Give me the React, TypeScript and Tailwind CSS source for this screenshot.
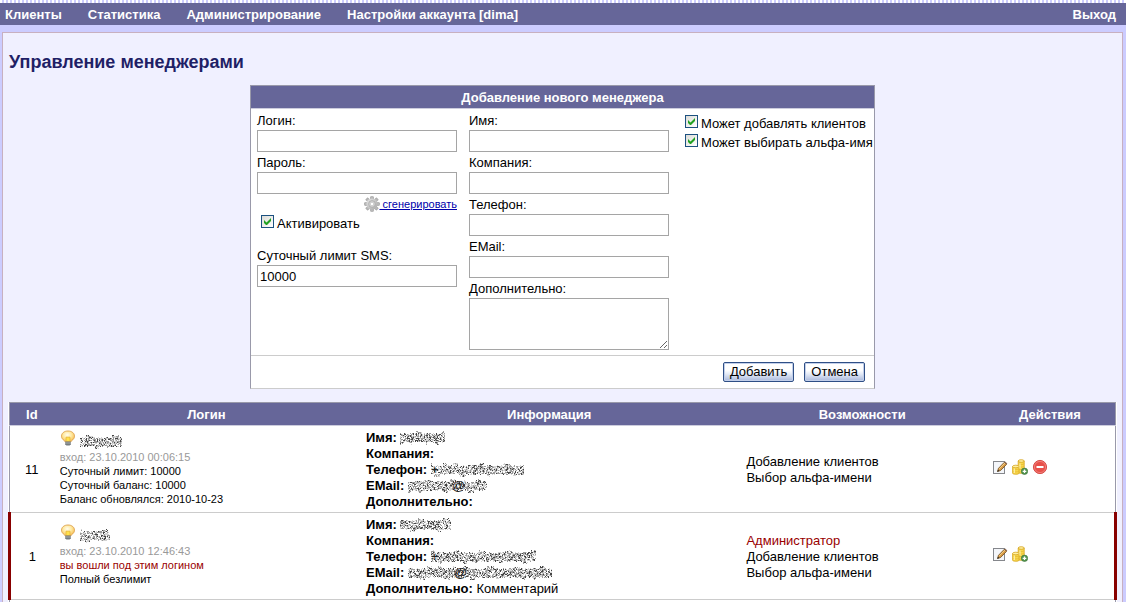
import React from "react";

const navItems = ["Клиенты", "Статистика", "Администрирование", "Настройки аккаунта [dima]"];

type Mark = { x: number; char: string };

/* Grainy smudge that hides a private value. */
function Smudge({ width, seed, marks = [] }: { width: number; seed: number; marks?: Mark[] }) {
  let state = seed * 7919 + 17;
  const next = () => {
    state = (state * 1103515245 + 12345) % 2147483648;
    return state / 2147483648;
  };
  let light = "";
  let mid = "";
  let dark = "";
  for (let x = 0; x < width; x++) {
    const wave = Math.sin(x * 0.5 + seed) + Math.sin(x * 0.23 + seed * 2);
    const top = wave > 0.6 ? 1 : 3;
    const bottom = wave < -0.9 ? 14 : 12;
    for (let y = top; y <= bottom; y++) {
      const stroke = (x + y + seed) % 6 < 2 || (x * 2 - y + 40) % 9 < 2;
      const edge = y === top || y === bottom ? 0.5 : 1;
      const r = next() / edge;
      const cell = `M${x} ${y}h1v1h-1z`;
      if (stroke ? r < 0.28 : r < 0.06) dark += cell;
      else if (stroke ? r < 0.62 : r < 0.3) mid += cell;
      else if (r < 0.75) light += cell;
    }
  }
  return (
    <svg width={width} height="16" viewBox={`0 0 ${width} 16`} className="inline-block align-top" shapeRendering="crispEdges" role="img" aria-label="скрыто">
      <path d={light} fill="#d4d4d4" />
      <path d={mid} fill="#999999" />
      <path d={dark} fill="#444444" />
      {marks.map((m) => (
        <text key={m.x} x={m.x} y="12" fontSize="13" fill="#222">
          {m.char}
        </text>
      ))}
    </svg>
  );
}

function Gear() {
  return (
    <svg width="16" height="16" viewBox="0 0 16 16" aria-hidden="true">
      <defs>
        <linearGradient id="gear" x1="0" y1="0" x2="1" y2="1">
          <stop offset="0" stopColor="#e6e6e6" />
          <stop offset="1" stopColor="#a8a8a8" />
        </linearGradient>
      </defs>
      <g fill="#b8b8b8" stroke="#8e8e8e" strokeWidth="0.5">
        {[0, 45, 90, 135].map((a) => (
          <rect key={a} x="6.5" y="0.4" width="3" height="15.2" rx="0.8" transform={`rotate(${a} 8 8)`} />
        ))}
      </g>
      <circle cx="8" cy="8" r="5.6" fill="url(#gear)" />
      <circle cx="8" cy="8" r="3.3" fill="#d8d8d8" stroke="#a8a8a8" strokeWidth="0.8" />
      <circle cx="8" cy="8" r="1.8" fill="#fff" stroke="#aaa" strokeWidth="0.5" />
    </svg>
  );
}

function Bulb() {
  return (
    <svg width="16" height="16" viewBox="0 0 16 16" className="shrink-0" aria-hidden="true">
      <defs>
        <radialGradient id="bulb" cx="0.45" cy="0.35" r="0.65">
          <stop offset="0" stopColor="#fffdf0" />
          <stop offset="0.5" stopColor="#ffe9a0" />
          <stop offset="1" stopColor="#f6bb50" />
        </radialGradient>
      </defs>
      <path d="M8 1C4 1 1.500 3.300 1.500 6.200c0 2 1.300 3.400 2.600 4.300.8.500 1 .9 1.100 1.500h5.600c.1-.6.3-1 1.100-1.500 1.300-.9 2.600-2.300 2.600-4.300C14.500 3.300 12 1 8 1z" fill="url(#bulb)" stroke="#dda04c" strokeWidth="0.9" />
      <path d="M6 11.500V7.200h4v4.300z" fill="#ffe14a" stroke="#e8b53a" strokeWidth="0.8" />
      <path d="M5.200 11.500h5.600v2.700l-1.200 1.300H6.400l-1.200-1.300z" fill="#777d80" />
      <path d="M5.200 13h5.600" stroke="#b9bdc0" strokeWidth="0.7" />
    </svg>
  );
}

function EditIcon() {
  return (
    <svg width="16" height="16" viewBox="0 0 16 16" aria-hidden="true">
      <rect x="1.500" y="2.500" width="11" height="12" fill="#f4f6fa" stroke="#85878c" />
      <path d="M5.500 12.500l1-3.200L12.300 3.300l2.200 2.100-5.900 6.100z" fill="#d99b45" stroke="#6b4a1d" strokeWidth="0.8" />
      <path d="M7.200 9.800l5.700-5.800" stroke="#f8d793" strokeWidth="0.9" />
      <path d="M5.300 12.800l.7-2 1.300 1.300z" fill="#222" />
      <path d="M12.300 3.300l.8-.8 2.200 2.100-.8.800z" fill="#8d6a53" />
    </svg>
  );
}

function CoinsIcon() {
  return (
    <svg width="16" height="16" viewBox="0 0 16 16" aria-hidden="true">
      <g fill="#f8d84c" stroke="#d6a51f" strokeWidth="0.8">
        <path d="M6.200 2v11.500c0 1 6 1 6 0V2z" />
        <ellipse cx="9.200" cy="2" rx="3" ry="1.300" fill="#fff0a0" />
        <path d="M6.200 4.800c1 1 5 1 6 0M6.200 7.300c1 1 5 1 6 0M6.200 9.800c1 1 5 1 6 0" fill="none" stroke="#e6ba32" />
        <path d="M.6 7.500v6.700c0 1.400 6.400 1.400 6.400 0V7.500z" />
        <ellipse cx="3.800" cy="7.500" rx="3.200" ry="1.300" fill="#fff0a0" />
        <path d="M.6 9.800c1 1.100 5.400 1.100 6.400 0M.6 12.100c1 1.100 5.400 1.100 6.400 0" fill="none" stroke="#e6ba32" />
      </g>
      <path d="M2.300 9.500v4.500M8 4.500v5" stroke="#fff3ae" strokeWidth="1.100" />
      <circle cx="12.500" cy="12.300" r="3.200" fill="#549450" stroke="#3a7438" strokeWidth="0.6" />
      <path d="M12.500 10.500v3.600M10.700 12.300h3.600" stroke="#fff" strokeWidth="1.300" />
    </svg>
  );
}

function RemoveIcon() {
  return (
    <svg width="16" height="16" viewBox="0 0 16 16" aria-hidden="true">
      <circle cx="8" cy="8" r="6.600" fill="#e8504a" stroke="#d8504c" />
      <circle cx="8" cy="8" r="5.600" fill="none" stroke="#f08a84" strokeWidth="0.8" />
      <rect x="4.500" y="7" width="7" height="2" fill="#fff" />
    </svg>
  );
}

function Check({ label }: { label: string }) {
  return (
    <label className="flex h-[19px] items-start gap-[3px]">
      <span className="grid">
        <input
          type="checkbox"
          defaultChecked
          className="peer size-[13px] appearance-none border border-[#1c5180] bg-linear-to-br from-[#dcdcd7] to-white [grid-area:1/1]"
        />
        <svg width="13" height="13" viewBox="0 0 13 13" className="pointer-events-none invisible [grid-area:1/1] peer-checked:visible" aria-hidden="true">
          <path d="M3 5v3l2 2h1l4-4V3L5.500 7.500z" fill="#21a121" />
        </svg>
      </span>
      <span className="leading-[18px] whitespace-nowrap">{label}</span>
    </label>
  );
}

const labelClass = "block pt-0.5 leading-[18px]";

function Field({ id, label, type = "text", value }: { id: string; label: string; type?: string; value?: string }) {
  return (
    <div className="flex flex-col">
      <label htmlFor={id} className={labelClass}>{label}</label>
      <input id={id} type={type} defaultValue={value} className="h-[22px] w-full border border-[#a5a5a5] bg-white px-0.5 outline-none" />
    </div>
  );
}

const buttonClass =
  "h-5 rounded-[2px] border border-[#2f4f86] bg-linear-to-b from-white from-40% via-[#e6ecf7] via-60% to-[#a9b8dc] px-1.5 leading-4 shadow-[inset_0_0_0_1px_#c3d0ea]";

function IconButton({ label, children }: { label: string; children: React.ReactNode }) {
  return (
    <button type="button" aria-label={label} className="size-4">
      {children}
    </button>
  );
}

export default function App() {
  return (
    <div className="flex min-h-screen flex-col bg-[#ccccff] font-['Liberation_Sans',Arial,sans-serif] text-[13px] leading-4 text-black">
      <div className="h-[3px] bg-[repeating-linear-gradient(90deg,#ffffff_0_2px,#ccccff_2px_4px)]" />
      <header className="flex h-[22px] items-center justify-between bg-[#666699] pt-0.5 pr-2.5 pl-[5px] font-bold text-white">
        <nav className="flex gap-[26px]">
          {navItems.map((item) => (
            <a key={item} href="#">{item}</a>
          ))}
        </nav>
        <a href="#">Выход</a>
      </header>

      <main className="mt-[7px] mr-[3px] ml-[2px] flex-1 border border-b-0 border-[#c8b0c0] bg-[#f0f0ff] px-[5px]">
        <h1 className="px-px pt-[17px] text-[18px] leading-6 font-bold text-[#1f1f66]">Управление менеджерами</h1>

        <form className="mx-auto mt-[11px] w-[625px] border border-[#9999aa] border-b-[#cccccc] bg-white" onSubmit={(e) => e.preventDefault()}>
          <h2 className="h-[23px] border-b border-[#ccccdd] bg-[#666699] text-center leading-[23px] font-bold text-white">
            Добавление нового менеджера
          </h2>
          <div className="flex gap-3 pt-px pb-[5px] pl-1.5">
            <div className="w-[200px] shrink-0">
              <Field id="login" label="Логин:" />
              <Field id="password" label="Пароль:" type="password" />
              <div className="flex h-5 items-center justify-end text-[11px]">
                <Gear />
                <a href="#" className="whitespace-pre text-[#0000aa] underline">{" сгенерировать"}</a>
              </div>
              <div className="px-1 pt-px pb-[11px]">
                <Check label="Активировать" />
              </div>
              <Field id="limit" label="Суточный лимит SMS:" value="10000" />
            </div>
            <div className="w-[200px] shrink-0">
              <Field id="name" label="Имя:" />
              <Field id="company" label="Компания:" />
              <Field id="phone" label="Телефон:" />
              <Field id="email" label="EMail:" />
              <label htmlFor="extra" className={labelClass}>Дополнительно:</label>
              <textarea id="extra" className="block h-[52px] w-full border border-[#a5a5a5] bg-white outline-none" />
            </div>
            <div className="pt-[5px] pl-1">
              <Check label="Может добавлять клиентов" />
              <Check label="Может выбирать альфа-имя" />
            </div>
          </div>
          <div className="flex justify-end gap-2.5 border-t border-[#cccccc] px-[9px] py-1.5">
            <button type="submit" className={buttonClass}>Добавить</button>
            <button type="reset" className={buttonClass}>Отмена</button>
          </div>
        </form>

        <table className="mt-[13px] w-full table-fixed border-collapse border border-b-0 border-[#9999aa] bg-white">
          <colgroup>
            <col className="w-[4%]" />
            <col className="w-[27.6%]" />
            <col className="w-[34.4%]" />
            <col className="w-[22.2%]" />
            <col />
          </colgroup>
          <thead>
            <tr className="h-[23px] border-b border-[#ccccdd] bg-[#666699] text-white">
              <th className="pt-0.5">Id</th>
              <th className="pt-0.5">Логин</th>
              <th className="pt-0.5">Информация</th>
              <th className="pt-0.5">Возможности</th>
              <th className="pt-0.5">Действия</th>
            </tr>
          </thead>
          <tbody>
            <tr className="border-b border-b-[#cccccc]">
              <td className="pt-0.5 text-center">11</td>
              <td className="px-1.5 pb-0.5 text-[11px] leading-[14px]">
                <div className="flex h-5 items-start gap-1">
                  <Bulb />
                  <span className="self-end"><Smudge width={42} seed={3} /></span>
                </div>
                <div className="text-[#999999]">вход: 23.10.2010 00:06:15</div>
                <div>Суточный лимит: 10000</div>
                <div>Суточный баланс: 10000</div>
                <div>Баланс обновлялся: 2010-10-23</div>
              </td>
              <td className="px-[7px] pt-1 pb-0.5">
                <div><b>Имя:</b> <Smudge width={45} seed={5} /></div>
                <div><b>Компания:</b></div>
                <div><b>Телефон:</b> <Smudge width={93} seed={8} marks={[{ x: 0, char: "+" }]} /></div>
                <div><b>EMail:</b> <Smudge width={79} seed={11} marks={[{ x: 44, char: "@" }]} /></div>
                <div><b>Дополнительно:</b></div>
              </td>
              <td className="px-[7px] pt-0.5">
                <div>Добавление клиентов</div>
                <div>Выбор альфа-имени</div>
              </td>
              <td className="px-[7px] pb-1">
                <div className="flex gap-1">
                  <IconButton label="Изменить"><EditIcon /></IconButton>
                  <IconButton label="Пополнить"><CoinsIcon /></IconButton>
                  <IconButton label="Удалить"><RemoveIcon /></IconButton>
                </div>
              </td>
            </tr>
            <tr className="border-x-3 border-b border-x-[#880000] border-b-[#cccccc]">
              <td className="pt-0.5 text-center">1</td>
              <td className="px-1.5 pb-0.5 text-[11px] leading-[14px]">
                <div className="flex h-5 items-start gap-1">
                  <Bulb />
                  <span className="self-end"><Smudge width={30} seed={14} /></span>
                </div>
                <div className="text-[#999999]">вход: 23.10.2010 12:46:43</div>
                <div className="text-[#990000]">вы вошли под этим логином</div>
                <div>Полный безлимит</div>
              </td>
              <td className="px-[7px] pt-1 pb-0.5">
                <div><b>Имя:</b> <Smudge width={51} seed={17} /></div>
                <div><b>Компания:</b></div>
                <div><b>Телефон:</b> <Smudge width={105} seed={20} marks={[{ x: 0, char: "+" }]} /></div>
                <div><b>EMail:</b> <Smudge width={144} seed={23} marks={[{ x: 46, char: "@" }]} /></div>
                <div><b>Дополнительно:</b> Комментарий</div>
              </td>
              <td className="px-[7px] pt-0.5">
                <div className="text-[#990000]">Администратор</div>
                <div>Добавление клиентов</div>
                <div>Выбор альфа-имени</div>
              </td>
              <td className="px-[7px] pb-1">
                <div className="flex gap-1">
                  <IconButton label="Изменить"><EditIcon /></IconButton>
                  <IconButton label="Пополнить"><CoinsIcon /></IconButton>
                </div>
              </td>
            </tr>
            <tr>
              <td colSpan={5} className="h-[2px]" />
            </tr>
          </tbody>
        </table>
      </main>
    </div>
  );
}
